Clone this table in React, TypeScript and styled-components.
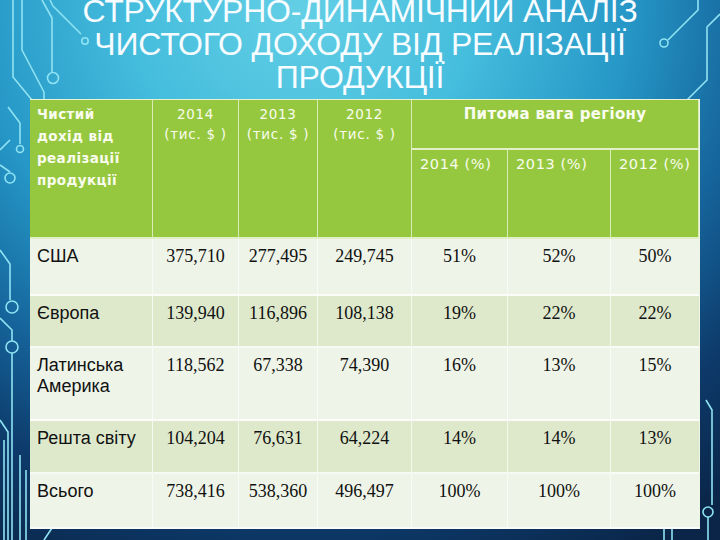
import React from "react";
import styled, { createGlobalStyle } from "styled-components";

const Global = createGlobalStyle`
  html, body { margin: 0; padding: 0; }
  body { width: 720px; height: 540px; overflow: hidden; }
`;

const Slide = styled.div`
  position: relative;
  width: 720px;
  height: 540px;
  overflow: hidden;
  background:
    radial-gradient(ellipse 95% 115% at 42% 2%, #63cfe5 0%, #45bddd 25%, #2596c6 48%, #15639a 66%, #0d3a6a 82%, #0a2547 100%);
  display: flex;
  flex-direction: column;
  align-items: flex-start;
`;

const Circuit = styled.svg`
  position: absolute;
  inset: 0;
  pointer-events: none;
`;

const Title = styled.h1`
  position: relative;
  margin: -5px 0 0 0;
  width: 720px;
  font-family: "Liberation Sans", Arial, sans-serif;
  font-weight: 400;
  font-size: 32px;
  line-height: 33px;
  color: #f6fcff;
  text-align: center;
  text-transform: uppercase;
  letter-spacing: -0.2px;
`;

const Table = styled.div`
  position: relative;
  margin: 5px 0 0 30px;
  display: grid;
  grid-template-columns: 123px 86px 79px 94px 96px 103px 88px;
  grid-template-rows: 50px 89px 57px 52px 73px 53px 55px;
  border-top: 1px solid #e9f3d4;
  border-right: 1px solid #eef4e6;
  box-sizing: border-box;
  width: 670px;
`;

const HeadCell = styled.div<{ $col: string; $row: string; $align?: string; $pt?: number }>`
  grid-column: ${(p) => p.$col};
  grid-row: ${(p) => p.$row};
  background: #96c83f;
  box-sizing: border-box;
  border-right: 1px solid rgba(240, 248, 225, 0.75);
  border-bottom: 2px solid rgba(240, 248, 225, 0.85);
  padding: ${(p) => p.$pt ?? 3}px 4px 0 ${(p) => (p.$align === "left" ? 7 : 4)}px;
  text-align: ${(p) => p.$align ?? "center"};
  color: #f9fcee;
  font-family: "DejaVu Sans", Verdana, sans-serif;
  font-size: 13.5px;
  line-height: 20px;
  letter-spacing: 0.7px;
`;

const LeftHead = styled(HeadCell)`
  font-weight: 700;
  font-size: 13.5px;
  line-height: 22px;
  letter-spacing: 0.4px;
  padding-right: 0;
  white-space: nowrap;
`;

const GroupHead = styled(HeadCell)`
  font-size: 15px;
  line-height: 22px;
  letter-spacing: 0.3px;
  font-weight: 700;
`;

const SubHead = styled(HeadCell)`
  padding-left: 8px;
  font-size: 14.5px;
  line-height: 22px;
  letter-spacing: 0.6px;
`;

const Cell = styled.div<{ $dark: boolean; $serif?: boolean; $last?: boolean }>`
  background: ${(p) => (p.$dark ? "#dee9cc" : "#eef4e7")};
  box-sizing: border-box;
  border-right: ${(p) => (p.$last ? "none" : "1px solid rgba(255,255,255,0.7)")};
  border-bottom: 2px solid rgba(255, 255, 255, 0.8);
  padding: 7px 7px 0 7px;
  color: #111;
  font-family: ${(p) => (p.$serif ? '"Liberation Serif", "Times New Roman", serif' : '"Liberation Sans", Arial, sans-serif')};
  font-size: 18px;
  line-height: 21px;
  text-align: ${(p) => (p.$serif ? "center" : "left")};
`;

type Row = { name: string; vals: string[]; dark: boolean };

const rows: Row[] = [
  { name: "США", vals: ["375,710", "277,495", "249,745", "51%", "52%", "50%"], dark: false },
  { name: "Європа", vals: ["139,940", "116,896", "108,138", "19%", "22%", "22%"], dark: true },
  { name: "Латинська Америка", vals: ["118,562", "67,338", "74,390", "16%", "13%", "15%"], dark: false },
  { name: "Решта світу", vals: ["104,204", "76,631", "64,224", "14%", "14%", "13%"], dark: true },
  { name: "Всього", vals: ["738,416", "538,360", "496,497", "100%", "100%", "100%"], dark: false },
];

const stroke = "#8fe3f3";

function CircuitArt() {
  return (
    <Circuit width="720" height="540" viewBox="0 0 720 540">
      <g fill="none" stroke={stroke} strokeWidth="1.6" strokeLinejoin="round">
        <path d="M50 0 L53 6 L81 34" />
        <circle cx="85" cy="41" r="3.2" />
        <path d="M42 0 L52 18 L52 72" />
        <circle cx="53" cy="78" r="5.5" />
        <path d="M22 0 L22 50 L44 92 L44 100" />
        <path d="M13 0 L13 77 L32 100" />
        <path d="M8 107 L20 123 L20 144" />
        <circle cx="20" cy="149" r="3.5" />
        <path d="M0 150 L10 140" />
        <path d="M0 165 L10 172" />
        <circle cx="10" cy="178" r="5" />
        <path d="M0 250 L10 264 L10 300" />
        <circle cx="12" cy="307" r="6" />
        <path d="M0 318 L12 330 L12 341" />
        <circle cx="12" cy="347" r="6" />
        <path d="M12 353 L12 540" />
        <path d="M4 440 L4 540" />
        <path d="M20 455 L20 540" />
        <path d="M26 470 L26 540" />
        <path d="M0 420 L8 432 L8 540" />
        <path d="M44 540 L52 528" />
        <path d="M698 0 L698 10 L668 40" />
        <circle cx="664" cy="43" r="4" />
        <path d="M720 14 L707 27 L707 80 L687 100" />
        <path d="M706 400 L712 410 L712 505" />
        <circle cx="708" cy="512" r="5" />
        <path d="M708 517 L708 540" />
        <path d="M664 528 L664 540" />
        <path d="M672 528 L672 540" />
      </g>
    </Circuit>
  );
}

export default function App() {
  return (
    <>
      <Global />
      <Slide>
        <CircuitArt />
        <Title>
          Структурно-динамічний аналіз
          <br />
          чистого доходу від реалізації
          <br />
          продукції
        </Title>
        <Table>
          <LeftHead $col="1" $row="1 / span 2" $align="left">
            Чистий
            <br />
            дохід від
            <br />
            реалізації
            <br />
            продукції
          </LeftHead>
          <HeadCell $col="2" $row="1 / span 2" $pt={4}>
            2014
            <br />
            (тис. $ )
          </HeadCell>
          <HeadCell $col="3" $row="1 / span 2" $pt={4}>
            2013
            <br />
            (тис. $ )
          </HeadCell>
          <HeadCell $col="4" $row="1 / span 2" $pt={4}>
            2012
            <br />
            (тис. $ )
          </HeadCell>
          <GroupHead $col="5 / span 3" $row="1">
            Питома вага регіону
          </GroupHead>
          <SubHead $col="5" $row="2" $align="left">
            2014 (%)
          </SubHead>
          <SubHead $col="6" $row="2" $align="left">
            2013 (%)
          </SubHead>
          <SubHead $col="7" $row="2" $align="left">
            2012 (%)
          </SubHead>
          {rows.map((r) => (
            <React.Fragment key={r.name}>
              <Cell $dark={r.dark}>{r.name}</Cell>
              {r.vals.map((v, i) => (
                <Cell key={i} $dark={r.dark} $serif $last={i === r.vals.length - 1}>
                  {v}
                </Cell>
              ))}
            </React.Fragment>
          ))}
        </Table>
      </Slide>
    </>
  );
}
